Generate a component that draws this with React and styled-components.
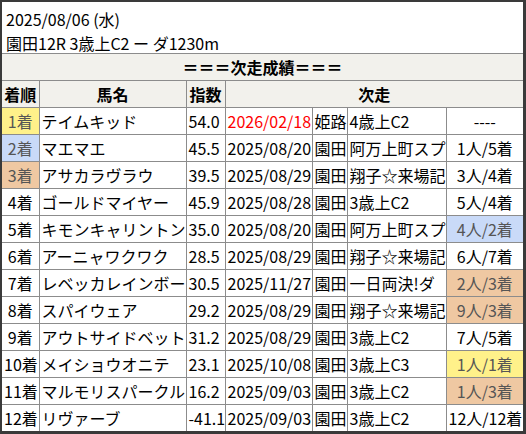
import React from 'react';
import styled, { createGlobalStyle } from 'styled-components';

const Global = createGlobalStyle`
  html, body {
    margin: 0;
    padding: 0;
    background: #3a3a3a;
  }
  body {
    font-family: "Noto Sans CJK JP", "Noto Sans", sans-serif;
    font-size: 16px;
    color: #000;
  }
`;

const Frame = styled.div`
  width: 526px;
  height: 434px;
  box-sizing: border-box;
  padding: 2px 3px 3px 2px;
  background: #3a3a3a;
`;

const Panel = styled.div`
  background: #fff;
  height: 100%;
  overflow: hidden;
`;

const Info = styled.div`
  height: 51px;
  padding: 5px 0 0 4px;
  box-sizing: border-box;
  line-height: 24px;
`;

const Table = styled.table`
  width: 521px;
  table-layout: fixed;
  border-collapse: collapse;
  border-style: hidden;
  border-top: 1px solid #8c8c8c;
`;

const Cell = styled.td`
  border: 1px solid #8c8c8c;
  height: 26px;
  padding: 0 2px;
  white-space: nowrap;
  overflow: hidden;
  line-height: 26px;
  text-align: ${p => p.$align || 'left'};
  background: ${p => p.$bg || 'transparent'};
  color: ${p => (p.$red ? '#ff0000' : p.$bg ? '#555' : '#000')};
`;

const Head = styled.th`
  border: 1px solid #8c8c8c;
  height: 26px;
  padding: 0 2px;
  background: #f2f1ec;
  font-weight: bold;
  white-space: nowrap;
  overflow: hidden;
  line-height: 26px;
  text-align: center;
`;

const colors = {
  yellow: '#fff18a',
  blue: '#c9daf8',
  orange: '#efc8a2',
};

const rows = [
  ['1着', 'テイムキッド', '54.0', '2026/02/18', '姫路', '4歳上C2', '----', 'yellow', null, true],
  ['2着', 'マエマエ', '45.5', '2025/08/20', '園田', '阿万上町スプ', '1人/5着', 'blue'],
  ['3着', 'アサカラヴラウ', '39.5', '2025/08/29', '園田', '翔子☆来場記', '3人/4着', 'orange'],
  ['4着', 'ゴールドマイヤー', '45.9', '2025/08/28', '園田', '3歳上C2', '5人/4着'],
  ['5着', 'キモンキャリントン', '35.0', '2025/08/20', '園田', '阿万上町スプ', '4人/2着', null, 'blue'],
  ['6着', 'アーニャワクワク', '28.5', '2025/08/29', '園田', '翔子☆来場記', '6人/7着'],
  ['7着', 'レベッカレインボー', '30.5', '2025/11/27', '園田', '一日両決!ダ', '2人/3着', null, 'orange'],
  ['8着', 'スパイウェア', '29.2', '2025/08/29', '園田', '翔子☆来場記', '9人/3着', null, 'orange'],
  ['9着', 'アウトサイドベット', '31.2', '2025/08/29', '園田', '3歳上C2', '7人/5着'],
  ['10着', 'メイショウオニテ', '23.1', '2025/10/08', '園田', '3歳上C3', '1人/1着', null, 'yellow'],
  ['11着', 'マルモリスパークル', '16.2', '2025/09/03', '園田', '3歳上C2', '1人/3着', null, 'orange'],
  ['12着', 'リヴァーブ', '-41.1', '2025/09/03', '園田', '3歳上C2', '12人/12着'],
];

export default function App() {
  return (
    <Frame>
      <Global />
      <Panel>
        <Info>
          <div>2025/08/06 (水)</div>
          <div>園田12R 3歳上C2 ー ダ1230m</div>
        </Info>
        <Table>
          <colgroup>
            <col style={{ width: 37 }} />
            <col style={{ width: 147 }} />
            <col style={{ width: 39 }} />
            <col style={{ width: 87 }} />
            <col style={{ width: 35 }} />
            <col style={{ width: 99 }} />
            <col style={{ width: 77 }} />
          </colgroup>
          <thead>
            <tr>
              <Head colSpan={7}>＝＝＝次走成績＝＝＝</Head>
            </tr>
            <tr>
              <Head>着順</Head>
              <Head>馬名</Head>
              <Head>指数</Head>
              <Head colSpan={4}>次走</Head>
            </tr>
          </thead>
          <tbody>
            {rows.map(r => (
              <tr key={r[0]}>
                <Cell $align="center" $bg={colors[r[7]]}>{r[0]}</Cell>
                <Cell>{r[1]}</Cell>
                <Cell>{r[2]}</Cell>
                <Cell $red={r[9]}>{r[3]}</Cell>
                <Cell>{r[4]}</Cell>
                <Cell>{r[5]}</Cell>
                <Cell $align="center" $bg={colors[r[8]]}>{r[6]}</Cell>
              </tr>
            ))}
          </tbody>
        </Table>
      </Panel>
    </Frame>
  );
}
